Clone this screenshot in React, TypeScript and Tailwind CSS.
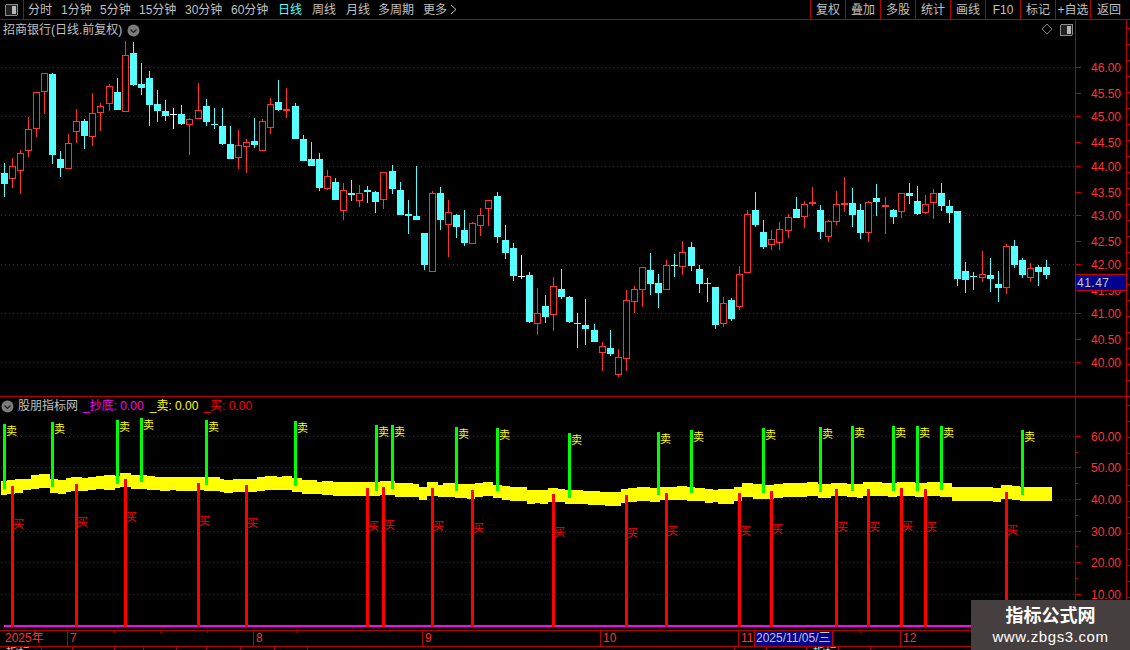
const FONT = 'font-["Liberation_Sans","Noto_Sans_CJK_SC",sans-serif]';

const NAV = [
  { label: '分时', w: 'w-[33px]' },
  { label: '1分钟', w: 'w-[39px]' },
  { label: '5分钟', w: 'w-[39px]' },
  { label: '15分钟', w: 'w-[46px]' },
  { label: '30分钟', w: 'w-[46px]' },
  { label: '60分钟', w: 'w-[47px]' },
  { label: '日线', w: 'w-[34px]', active: true },
  { label: '周线', w: 'w-[34px]' },
  { label: '月线', w: 'w-[32px]' },
  { label: '多周期', w: 'w-[45px]' },
];
const ACTIONS = ['复权', '叠加', '多股', '统计', '画线', 'F10', '标记', '+自选', '返回'];

// [bodyTop, bodyBottom, wickTop, wickBottom, kind], read off 3x crops, so y = base + v / 3
type Raw = [number, number, number, number, 'c' | 'r' | 'w'];
const SEGMENTS: { base: number; rows: Raw[] }[] = [
  {
    base: 40,
    rows: [
      [399, 431, 370, 470, 'c'], [379, 418, 355, 443, 'r'], [340, 392, 331, 461, 'r'], [268, 332, 232, 350, 'r'],
      [157, 268, 157, 290, 'r'], [100, 157, 100, 221, 'r'], [102, 345, 99, 371, 'c'], [358, 384, 334, 410, 'c'],
      [310, 386, 282, 386, 'r'], [244, 275, 208, 308, 'r'], [244, 287, 238, 326, 'c'], [220, 290, 160, 317, 'r'],
      [199, 220, 190, 272, 'r'], [139, 191, 132, 212, 'r'], [156, 210, 114, 210, 'c'], [46, 215, 3, 215, 'r'],
      [40, 134, 7, 137, 'c'], [132, 144, 69, 165, 'c'], [114, 195, 93, 258, 'c'], [192, 213, 150, 246, 'c'],
      [213, 228, 180, 243, 'c'], [222, 225, 204, 267, 'w'], [222, 252, 195, 255, 'c'], [238, 254, 234, 345, 'r'],
      [211, 236, 129, 236, 'r'], [198, 246, 177, 258, 'c'], [252, 255, 204, 267, 'c'], [258, 312, 204, 315, 'c'],
      [312, 357, 258, 357, 'c'], [316, 353, 270, 387, 'r'], [307, 320, 297, 399, 'r'], [303, 315, 234, 324, 'c'],
      [244, 332, 237, 332, 'r'], [193, 263, 174, 282, 'r'], [186, 210, 120, 213, 'c'],
    ],
  },
  {
    base: 80,
    rows: [
      [87, 93, 24, 114, 'r'], [78, 177, 69, 177, 'c'], [177, 243, 165, 243, 'c'], [237, 258, 186, 258, 'c'],
      [237, 324, 219, 333, 'c'], [289, 327, 270, 330, 'r'], [306, 360, 294, 360, 'c'], [331, 392, 309, 420, 'r'],
      [339, 345, 300, 363, 'c'], [340, 362, 315, 381, 'r'], [330, 336, 318, 369, 'c'], [336, 366, 333, 399, 'c'],
      [277, 359, 277, 387, 'r'], [273, 327, 255, 342, 'c'], [330, 405, 306, 405, 'c'], [402, 408, 360, 462, 'c'],
      [408, 420, 258, 420, 'c'],
    ],
  },
  {
    base: 190,
    rows: [
      [129, 225, 129, 240, 'c'], [10, 245, 4, 245, 'r'], [10, 90, -9, 120, 'c'], [67, 104, 30, 201, 'r'],
      [75, 111, 72, 144, 'c'], [120, 159, 60, 168, 'c'], [99, 161, 96, 161, 'r'], [76, 107, 54, 138, 'r'],
      [31, 56, 31, 108, 'r'], [18, 141, 6, 159, 'c'], [150, 189, 105, 207, 'c'], [174, 258, 159, 273, 'c'],
      [258, 261, 195, 267, 'w'], [255, 396, 246, 399, 'c'], [370, 401, 294, 435, 'r'], [348, 381, 315, 399, 'c'],
      [289, 374, 261, 423, 'r'], [297, 321, 237, 327, 'c'], [321, 396, 318, 399, 'c'], [399, 402, 369, 474, 'c'],
      [405, 417, 327, 465, 'c'], [420, 456, 402, 456, 'c'], [469, 488, 456, 543, 'r'], [474, 492, 420, 498, 'c'],
      [502, 554, 477, 561, 'r'], [331, 506, 300, 543, 'r'], [298, 335, 288, 369, 'r'], [232, 299, 232, 351, 'r'],
      [240, 282, 189, 315, 'c'], [279, 309, 252, 354, 'c'], [226, 299, 210, 299, 'r'], [225, 228, 192, 261, 'c'],
      [187, 230, 153, 255, 'r'], [171, 228, 156, 243, 'c'],
    ],
  },
  {
    base: 170,
    rows: [
      [297, 342, 285, 369, 'c'], [339, 342, 324, 396, 'c'], [351, 465, 351, 477, 'c'], [400, 461, 381, 471, 'r'],
      [390, 447, 384, 453, 'c'], [313, 410, 288, 420, 'r'], [133, 308, 121, 308, 'r'], [120, 165, 66, 171, 'c'],
      [186, 231, 150, 237, 'c'], [208, 224, 180, 240, 'r'], [178, 218, 156, 240, 'r'], [142, 182, 132, 204, 'r'],
      [117, 144, 81, 144, 'c'], [103, 140, 93, 174, 'r'], [96, 102, 51, 108, 'r'], [120, 186, 105, 207, 'c'],
      [154, 200, 150, 216, 'r'], [103, 155, 63, 165, 'r'], [99, 105, 21, 126, 'r'], [99, 135, 54, 171, 'c'],
      [120, 189, 102, 207, 'c'], [97, 188, 93, 216, 'r'], [84, 96, 42, 138, 'c'], [105, 111, 81, 192, 'r'],
      [120, 141, 117, 162, 'c'], [70, 125, 70, 144, 'r'], [69, 78, 39, 102, 'c'], [93, 132, 48, 135, 'c'],
      [103, 129, 75, 132, 'r'], [70, 98, 57, 147, 'r'], [69, 108, 39, 123, 'c'], [108, 129, 90, 159, 'c'],
      [123, 327, 123, 348, 'c'], [303, 330, 276, 369, 'c'], [318, 321, 306, 360, 'c'], [313, 323, 243, 336, 'r'],
      [315, 327, 264, 366, 'c'], [342, 354, 303, 396, 'c'], [229, 353, 222, 372, 'r'], [228, 285, 210, 294, 'c'],
      [270, 315, 264, 324, 'c'], [295, 323, 279, 333, 'r'], [291, 306, 285, 348, 'c'], [291, 315, 270, 327, 'c'],
    ],
  },
];

// the terminal's candle pitch is 8 px with one extra pixel about every twelve candles
const PITCH_JUMPS = [13, 24, 36, 48, 61, 73, 85, 97, 109, 121];
const candles = SEGMENTS.flatMap((s) =>
  s.rows.map(([t, b, wt, wb, kind]) => ({
    top: Math.round(s.base + t / 3),
    bottom: Math.round(s.base + b / 3),
    wickTop: Math.round(s.base + wt / 3),
    wickBottom: Math.round(s.base + wb / 3),
    kind,
  }))
).map((c, i) => ({ ...c, x: 4 + i * 8 + PITCH_JUMPS.filter((j) => i >= j).length }));

const COLORS = { c: '#55ffff', r: '#ff3232', w: '#ffffff' };

const PRICE_GRID = [67, 116, 166, 215, 264, 313, 362];
const PRICE_AXIS = [
  ['46.00', 67], ['45.50', 93], ['45.00', 116], ['44.50', 142], ['44.00', 166], ['43.50', 192], ['43.00', 215],
  ['42.50', 241], ['42.00', 264], ['41.50', 290], ['41.00', 313], ['40.50', 339], ['40.00', 362],
] as const;
const IND_AXIS = [
  ['60.00', 436], ['50.00', 467], ['40.00', 499], ['30.00', 531], ['20.00', 562], ['10.00', 594],
] as const;

// [x, top, bottom]
const BAND: [number, number, number][] = [
  [1, 481, 495], [7, 480, 494], [15, 479, 493], [23, 479, 490], [31, 475, 489], [39, 474, 488], [50, 479, 493],
  [58, 480, 494], [66, 478, 492], [71, 477, 491], [82, 478, 491], [88, 477, 490], [96, 476, 489], [104, 475, 490],
  [115, 476, 488], [120, 473, 487], [131, 475, 489], [147, 476, 490], [155, 477, 490], [160, 477, 491],
  [170, 477, 490], [176, 477, 491], [197, 477, 490], [204, 477, 491], [220, 479, 492], [224, 480, 493],
  [233, 479, 492], [257, 477, 491], [265, 476, 490], [277, 477, 490], [282, 476, 490], [292, 478, 492],
  [302, 480, 494], [317, 482, 494], [322, 481, 495], [333, 482, 496], [363, 482, 496], [380, 481, 495],
  [395, 483, 497], [413, 484, 497], [419, 487, 500], [427, 482, 496], [438, 485, 497], [443, 483, 497],
  [455, 484, 498], [467, 484, 499], [475, 483, 497], [483, 482, 496], [493, 485, 498], [502, 486, 500],
  [510, 487, 501], [527, 490, 504], [535, 490, 503], [540, 490, 504], [548, 488, 502], [558, 489, 502],
  [565, 490, 504], [583, 491, 504], [588, 491, 505], [600, 492, 505], [605, 492, 506], [621, 489, 503],
  [628, 488, 502], [637, 487, 501], [650, 488, 502], [660, 487, 500], [677, 486, 500], [687, 487, 501],
  [695, 488, 501], [705, 489, 503], [713, 490, 502], [718, 489, 504], [734, 487, 501], [742, 483, 497],
  [753, 484, 499], [762, 485, 499], [774, 484, 498], [783, 483, 497], [807, 482, 496], [818, 484, 498],
  [831, 483, 496], [847, 484, 497], [857, 484, 498], [863, 482, 496], [882, 483, 496], [888, 483, 497],
  [897, 482, 496], [915, 483, 497], [927, 482, 496], [940, 483, 497], [952, 487, 501], [993, 488, 502],
  [1001, 485, 499], [1012, 486, 500], [1020, 487, 501], [1052, 487, 501],
];

// [x, top, bottom]
const SELL: [number, number, number][] = [
  [3, 424, 489], [51, 422, 487], [116, 420, 484], [140, 418, 482], [205, 420, 485], [294, 421, 486],
  [375, 425, 491], [391, 425, 489], [455, 427, 491], [496, 428, 491], [568, 433, 498], [657, 432, 495],
  [690, 430, 493], [762, 428, 493], [819, 427, 492], [851, 426, 491], [892, 426, 491], [916, 426, 491],
  [940, 426, 490], [1021, 430, 495],
];
// [x, top]
const BUY: [number, number][] = [
  [11, 486], [75, 484], [124, 479], [197, 483], [245, 485], [366, 488], [382, 487], [431, 488], [471, 490],
  [552, 494], [625, 495], [665, 493], [738, 493], [770, 491], [835, 489], [867, 489], [900, 488], [924, 489],
  [1005, 492],
];

const TIME_SEGMENTS = [
  { label: '2025年', w: 'w-[67px]' },
  { label: '7', w: 'w-[186px]' },
  { label: '8', w: 'w-[169px]' },
  { label: '9', w: 'w-[178px]' },
  { label: '10', w: 'w-[138px]' },
  { label: '11', w: 'w-[16px]' },
];
const TIME_TICKS = [114, 160, 207, 296, 860];
const FOOTER_TABS = [42, 31, 42, 29, 33, 30, 34, 34, 33, 427, 32, 40, 32, 32];

function Grid({ lines }: { lines: readonly number[] }) {
  return (
    <>
      {lines.map((y) => (
        <line key={y} x1={1} x2={1075} y1={y + 0.5} y2={y + 0.5} stroke="#a80000" strokeDasharray="1 3" />
      ))}
    </>
  );
}

function PriceChart() {
  return (
    <svg width={1075} height={376} viewBox="0 20 1075 376" shapeRendering="crispEdges" className="block">
      <Grid lines={PRICE_GRID} />
      {candles.map((c, i) => {
        const color = COLORS[c.kind];
        const h = Math.max(c.bottom - c.top, 1);
        const hollow = c.kind === 'r' && h > 2;
        return (
          <g key={i}>
            <rect x={c.x} y={c.wickTop} width={1} height={c.wickBottom - c.wickTop} fill={color} />
            {hollow ? (
              <rect x={c.x - 2.5} y={c.top + 0.5} width={6} height={h - 1} fill="#000" stroke={color} />
            ) : (
              <rect x={c.x - 3} y={c.top} width={7} height={h} fill={color} />
            )}
          </g>
        );
      })}
    </svg>
  );
}

function IndicatorChart() {
  return (
    <svg width={1075} height={233} viewBox="0 397 1075 233" className={`block ${FONT}`}>
      <g shapeRendering="crispEdges">
        <Grid lines={IND_AXIS.map((a) => a[1])} />
        {BAND.slice(0, -1).map(([x, top, bottom], i) => (
          <rect key={x} x={x} y={top} width={BAND[i + 1][0] - x} height={bottom - top} fill="#ffff00" />
        ))}
        <rect x={4} y={625} width={1071} height={2} fill="#ff00ff" />
        {SELL.map(([x, top, bottom]) => (
          <rect key={x} x={x} y={top} width={3} height={bottom - top} fill="#00ff00" />
        ))}
        {BUY.map(([x, top]) => (
          <rect key={x} x={x} y={top} width={3} height={627 - top} fill="#ff0000" />
        ))}
      </g>
      {SELL.map(([x, top]) => (
        <text key={x} x={x + 3} y={top + 11} fontSize={11} fill="#ffff00">卖</text>
      ))}
      {BUY.map(([x, top]) => (
        <text key={x} x={x + 2} y={top + 42} fontSize={11} fill="#ff0000">买</text>
      ))}
    </svg>
  );
}

function Axis({ top, height, labels, minor }: { top: number; height: number; labels: readonly (readonly [string, number])[]; minor: number[] }) {
  const rightTicks = Array.from({ length: Math.floor(height / 16) }, (_, i) => top + 8 + i * 16);
  return (
    <svg width={54} height={height} viewBox={`1076 ${top} 54 ${height}`} className={`block ${FONT}`}>
      <g shapeRendering="crispEdges">
        <rect x={1126} y={top} width={1} height={height} fill="#b40000" />
        {rightTicks.map((y) => (
          <rect key={y} x={1127} y={y} width={3} height={1} fill="#b40000" />
        ))}
        {labels.map(([, y]) => (
          <rect key={y} x={1076} y={y} width={5} height={1} fill="#c80000" />
        ))}
        {minor.map((y) => (
          <rect key={y} x={1076} y={y} width={2} height={1} fill="#c80000" />
        ))}
      </g>
      {labels.map(([label, y]) => (
        <text key={y} x={1091} y={y + 5} fontSize={12} fill="#ff3232">{label}</text>
      ))}
    </svg>
  );
}

function RoundChevron({ className }: { className: string }) {
  return (
    <svg width={13} height={13} viewBox="0 0 13 13" className={className}>
      <circle cx={6.5} cy={6.5} r={6} fill="#7c7c7c" />
      <polyline points="3.5,5.5 6.5,8.5 9.5,5.5" fill="none" stroke="#1c1c1c" strokeWidth={1.2} />
    </svg>
  );
}

function PaneToggle({ className }: { className: string }) {
  return (
    <svg width={13} height={12} viewBox="0 0 13 12" shapeRendering="crispEdges" className={className}>
      <rect x={0.5} y={0.5} width={12} height={11} rx={1.5} fill="#222" stroke="#8c8c8c" />
      <rect x={7} y={2} width={4} height={8} fill="#b8b8b8" />
    </svg>
  );
}

export default function App() {
  return (
    <div className={`relative flex h-[650px] w-[1130px] flex-col overflow-hidden bg-black text-xs ${FONT}`}>
      {/* toolbar */}
      <div className="flex h-5 items-center border-b border-[#b40000] text-[#c0c0c0]">
        <div className="flex h-full w-6 shrink-0 items-center justify-center border-r border-[#b40000]">
          <PaneToggle className="" />
        </div>
        <div className="ml-1 flex items-center whitespace-nowrap">
          {NAV.map((n) => (
            <span key={n.label} className={`${n.w} ${n.active ? 'text-[#55ffff]' : ''}`}>{n.label}</span>
          ))}
          <span>更多</span>
          <svg width={7} height={11} viewBox="0 0 7 11" className="ml-[3px]">
            <polyline points="1,1 6,5.5 1,10" fill="none" stroke="#c0c0c0" />
          </svg>
        </div>
        <div className="ml-auto flex h-full w-[320px]">
          {ACTIONS.map((a) => (
            <span key={a} className="flex h-full w-[35px] shrink-0 items-center justify-center whitespace-nowrap border-l border-[#b40000] last:w-[40px] last:justify-start last:pl-[6px]">
              {a}
            </span>
          ))}
        </div>
      </div>

      {/* price pane */}
      <div className="relative flex h-[377px] border-b border-[#b40000]">
        <div className="relative h-[376px] w-[1075px] shrink-0">
          <PriceChart />
          <div className="absolute left-[3px] top-[2px] flex items-center gap-[5px] text-[#c0c0c0]">
            <span>招商银行(日线.前复权)</span>
            <RoundChevron className="" />
          </div>
          <svg width={12} height={12} viewBox="0 0 12 12" className="absolute left-[1041px] top-[3px]">
            <polygon points="6,1 11,6 6,11 1,6" fill="none" stroke="#808080" />
          </svg>
          <PaneToggle className="absolute left-[1060px] top-[4px]" />
        </div>
        <div className="border-l border-[#b40000]">
          <Axis top={20} height={376} labels={PRICE_AXIS} minor={[]} />
        </div>
        <div className="absolute left-[1075px] top-[254px] flex h-[17px] w-[52px] items-center border border-[#c80000] bg-[#000090] pl-[1px] tracking-[0.5px] text-[#c8c8c8]">
          41.47
        </div>
      </div>

      {/* indicator pane */}
      <div className="flex h-[233px]">
        <div className="relative h-[233px] w-[1075px] shrink-0">
          <IndicatorChart />
          <div className="absolute left-[1px] top-px flex items-center whitespace-nowrap">
            <RoundChevron className="" />
            <span className="ml-[4px] text-[#c0c0c0]">股朋指标网</span>
            <span className="ml-[5px] text-[#ff00ff]">_抄底: 0.00</span>
            <span className="ml-[6px] text-[#ffff00]">_卖: 0.00</span>
            <span className="ml-[5px] text-[#ff0000]">_买: 0.00</span>
          </div>
        </div>
        <div className="border-l border-[#b40000]">
          <Axis top={397} height={233} labels={IND_AXIS} minor={[452, 483, 515, 546, 578, 610]} />
        </div>
      </div>

      {/* time axis */}
      <div className="relative flex h-[17px] shrink-0 items-center border-y border-[#b40000] text-[#ff3232]">
        {TIME_SEGMENTS.map((s, i) => (
          <span key={s.label} className={`h-full shrink-0 whitespace-nowrap pl-[2px] leading-[15px] ${s.w} ${i > 0 ? 'border-l border-[#b40000]' : 'pl-[5px]'}`}>
            {s.label}
          </span>
        ))}
        <span className="h-full w-[79px] shrink-0 border-x border-[#c80000] bg-[#000090] pl-[1px] leading-[15px] text-[#c8c8c8]">2025/11/05/三</span>
        <span className="h-full w-[67px] shrink-0" />
        <span className="h-full flex-1 border-l border-[#b40000] pl-[2px] leading-[15px]">12</span>
        {TIME_TICKS.map((x) => (
          <span key={x} className="absolute top-0 h-[2px] w-px bg-[#b40000]" style={{ left: x }} />
        ))}
      </div>

      {/* footer tabs, cut off by the window edge */}
      <div className="flex h-[3px] overflow-hidden text-[#c0c0c0]">
        {FOOTER_TABS.map((w, i) => (
          <span key={i} className={`h-full shrink-0 border-r border-[#b40000] pl-[6px] leading-[12px] ${i === 12 ? 'text-[#55ffff]' : ''}`} style={{ width: w }}>
            {i === 0 || i === 12 ? '指标' : ''}
          </span>
        ))}
      </div>

      {/* watermark */}
      <div className="absolute left-[971px] top-[600px] flex h-[50px] w-[159px] flex-col items-center bg-[#463f3f] text-white">
        <span className="mt-[4px] text-lg font-bold leading-[24px]">指标公式网</span>
        <span className="text-[15px] leading-[17px] tracking-[0.6px]">www.zbgs3.com</span>
      </div>
    </div>
  );
}
